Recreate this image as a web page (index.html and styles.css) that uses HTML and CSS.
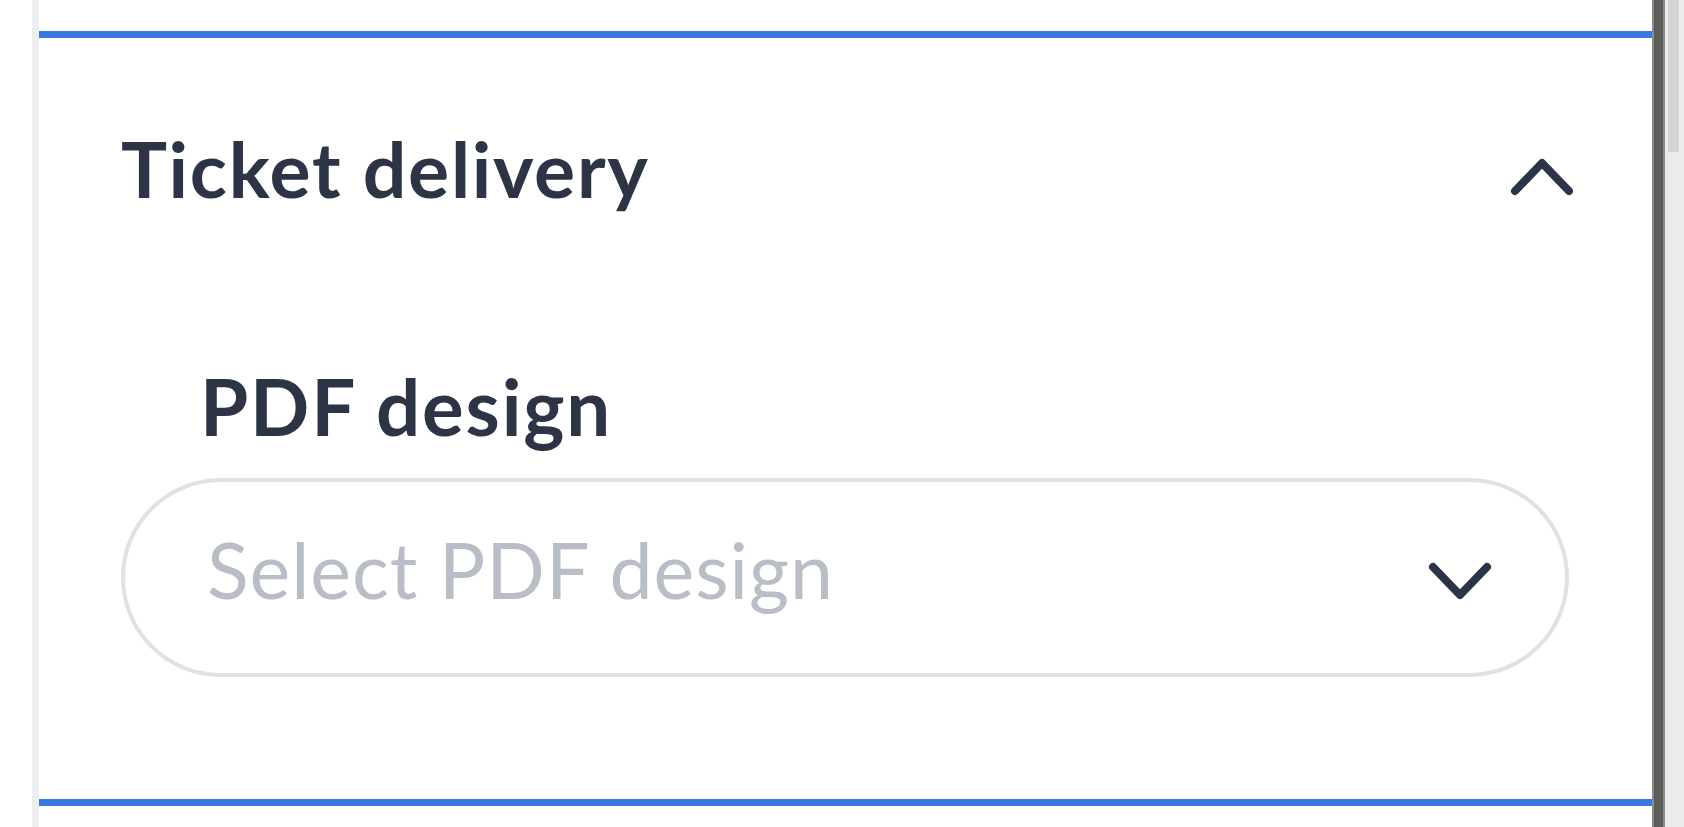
FILE: index.html
```html
<!DOCTYPE html>
<html lang="en">
<head>
<meta charset="utf-8">
<title>Ticket delivery</title>
<link rel="stylesheet" href="styles.css">
</head>
<body>
<div class="viewport">
  <div class="content">
    <div class="rail">
      <section class="panel">
        <div class="panel-head">
          <h3 class="panel-title">Ticket delivery</h3>
          <svg class="chev chev-up" viewBox="0 0 64 42" width="64" height="42" aria-hidden="true">
            <polyline points="5,37 32,9 59,37" />
          </svg>
        </div>
        <div class="field">
          <label class="field-label">PDF design</label>
          <div class="select">
            <span class="placeholder">Select PDF design</span>
            <svg class="chev chev-down" viewBox="0 0 64 42" width="64" height="42" aria-hidden="true">
              <polyline points="5,5 32,33 59,5" />
            </svg>
          </div>
        </div>
      </section>
    </div>
  </div>
  <div class="scrollbar">
    <div class="sb-edge"></div>
    <div class="sb-track"><div class="sb-thumb"></div></div>
  </div>
</div>
</body>
</html>
```
FILE: styles.css
```css
* { box-sizing: border-box; }
html, body { margin: 0; padding: 0; }
body {
  background: #ffffff;
  font-family: "Lato", "Noto Sans", sans-serif;
  color: #2c3446;
}
.viewport {
  display: flex;
  height: 827px;
  overflow: hidden;
}
.content {
  flex: 1;
  padding-left: 32px;
}
.rail {
  height: 100%;
  border-left: 7px solid #efeff3;
  padding-top: 31px;
}
.panel {
  height: 775px;
  border-top: 7px solid #3a7ae0;
  border-bottom: 7px solid #3a7ae0;
  padding: 84px 83px 0 82px;
}
.panel-head {
  display: flex;
  align-items: flex-start;
  justify-content: space-between;
}
.panel-title {
  margin: 0;
  font-size: 77px;
  line-height: 1.2;
  font-weight: 700;
  letter-spacing: 1.7px;
  color: #2c3446;
}
.chev {
  fill: none;
  stroke: #2c3548;
  stroke-width: 8;
  stroke-linecap: round;
  stroke-linejoin: round;
  flex: none;
}
.chev-up {
  margin-top: 32px;
  margin-right: -5px;
}
.field {
  margin-top: 146px;
}
.field-label {
  display: block;
  margin-left: 79px;
  font-size: 78px;
  line-height: 1.2;
  font-weight: 700;
  letter-spacing: 1.8px;
  color: #2c3446;
}
.select {
  margin-top: 24px;
  height: 199px;
  border: 4px solid #e0e1e5;
  border-radius: 100px;
  display: flex;
  align-items: center;
  justify-content: space-between;
  padding: 0 73px 17px 82px;
}
.placeholder {
  font-size: 77px;
  line-height: 1.2;
  font-weight: 400;
  letter-spacing: 1px;
  color: #b8bdc7;
}
.chev-down {
  margin-top: 28px;
}
.scrollbar {
  flex: none;
  width: 32px;
  display: flex;
}
.sb-edge {
  width: 13px;
  background: #5c5c5c;
  border-left: 2px solid #8a8a8a;
  border-right: 2px solid #8a8a8a;
}
.sb-track {
  flex: 1;
  background: #ebebeb;
  padding: 0 5px 0 3px;
}
.sb-thumb {
  height: 152px;
  background: #d4d4d4;
}
```
